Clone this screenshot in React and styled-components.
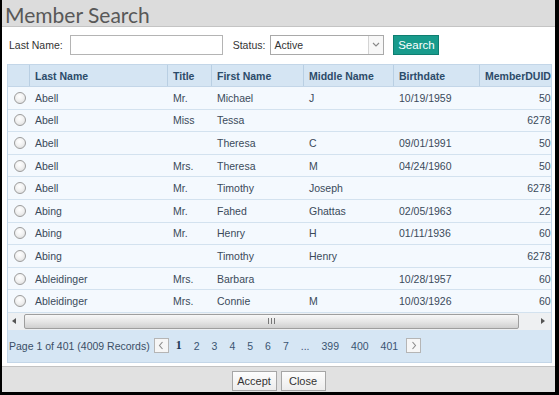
import React from "react";
import styled, { createGlobalStyle } from "styled-components";

const Global = createGlobalStyle`
  html, body { margin: 0; padding: 0; background: #ffffff; }
  body { font-family: "Liberation Sans", Arial, sans-serif; }
  * { box-sizing: border-box; }
`;

const FONT = `"Liberation Sans", Arial, sans-serif`;
const COLS = "21px 138px 44px 92px 90px 86px 101px";

const Frame = styled.div`
  width: 559px;
  height: 395px;
  border-left: 2px solid #000;
  border-right: 4px solid #000;
  border-bottom: 3px solid #000;
  background: #fff;
  display: flex;
  flex-direction: column;
  font-family: ${FONT};
  font-size: 10.5px;
  color: #333;
`;

const TitleBar = styled.div`
  height: 27px;
  background: #dcdcdc;
  border-bottom: 1px solid #c4c4c4;
  padding: 4px 0 0 3px;
  font-family: Lato, "Open Sans", sans-serif;
  font-size: 21px;
  line-height: 22px;
  color: #585858;
  white-space: nowrap;
`;

const Form = styled.div`
  display: flex;
  align-items: center;
  padding: 7px 0 9px 7px;
  height: 37px;
`;

const Label = styled.span`
  color: #333;
  margin-left: ${(p) => p.$ml || 0}px;
  margin-right: ${(p) => p.$mr || 4}px;
`;

const TextBox = styled.div`
  width: 153px;
  height: 20px;
  border: 1px solid #b4b4b4;
  background: #fff;
`;

const SelectBox = styled.div`
  width: 114px;
  height: 20px;
  border: 1px solid #a9a9a9;
  background: #fff;
  display: flex;
  align-items: stretch;
`;

const SelectText = styled.span`
  flex: 1;
  padding-left: 3px;
  line-height: 18px;
  color: #333;
`;

const SelectArrow = styled.span`
  width: 15px;
  border-left: 1px solid #d4d4d4;
  display: flex;
  align-items: center;
  justify-content: center;
  background: #f7f7f7;
`;

const SearchButton = styled.button`
  margin-left: 9px;
  width: 46px;
  height: 20px;
  padding: 0;
  border: 1px solid #0f7e71;
  background: #189b8c;
  color: #fff;
  font-family: ${FONT};
  font-size: 11.5px;
`;

const Grid = styled.div`
  margin-left: 5px;
  width: 545px;
  border: 1px solid #c3d6e8;
  display: flex;
  flex-direction: column;
`;

const Clip = styled.div`
  overflow: hidden;
  width: 543px;
`;

const HeaderRow = styled.div`
  display: grid;
  grid-template-columns: ${COLS};
  width: max-content;
  height: 22px;
  background: #d5e5f3;
  border-bottom: 1px solid #c3d6e8;
`;

const HeadCell = styled.div`
  border-left: ${(p) => (p.$first ? "none" : "1px solid #b9cfe3")};
  padding-left: 5px;
  display: flex;
  align-items: center;
  font-weight: bold;
  color: #2c4b69;
  white-space: nowrap;
`;

const Row = styled.div`
  display: grid;
  grid-template-columns: ${COLS};
  width: max-content;
  height: 22.6px;
  background: #f4f9fe;
  border-bottom: 1px solid #d3e2ef;
`;

const Cell = styled.div`
  display: flex;
  align-items: center;
  justify-content: ${(p) => (p.$right ? "flex-end" : "flex-start")};
  padding: ${(p) => (p.$right ? "0 6px 0 0" : "0 0 0 6px")};
  color: #3a4a5a;
  white-space: nowrap;
`;

const RadioCell = styled.div`
  display: flex;
  align-items: center;
  justify-content: center;
  padding-left: 2px;
`;

const Radio = styled.span`
  width: 12px;
  height: 12px;
  border-radius: 50%;
  border: 1px solid #9c9c9c;
  background: radial-gradient(circle at 45% 35%, #ffffff 0%, #f0f0f0 50%, #d6d6d6 100%);
`;

const ScrollBar = styled.div`
  height: 17px;
  background: #eef0f2;
  display: flex;
  align-items: center;
`;

const ScrollArrow = styled.div`
  width: ${(p) => p.$w}px;
  height: 17px;
  display: flex;
  align-items: center;
  justify-content: ${(p) => (p.$right ? "flex-end" : "flex-start")};
  padding: ${(p) => (p.$right ? "0 6px 0 0" : "0 0 0 4px")};
`;

const Thumb = styled.div`
  flex: 1;
  height: 15px;
  border: 1px solid #9e9e9e;
  border-radius: 2px;
  background: linear-gradient(#f8f8f8, #e4e4e4 55%, #cfcfcf);
  display: flex;
  align-items: center;
  justify-content: center;
`;

const Grip = styled.span`
  width: 7px;
  height: 6px;
  border-left: 1px solid #777;
  border-right: 1px solid #777;
  position: relative;
  &::after {
    content: "";
    position: absolute;
    left: 2px;
    top: 0;
    width: 1px;
    height: 6px;
    background: #777;
  }
`;

const Pager = styled.div`
  height: 32px;
  background: #d6e6f4;
  display: flex;
  align-items: center;
  padding-left: 1px;
  color: #3a5472;
`;

const PagerInfo = styled.span`
  color: #3a4f66;
  margin-right: 4px;
`;

const PageNav = styled.span`
  width: 15px;
  height: 15px;
  border: 1px solid #b5b5b5;
  background: #f6f6f6;
  display: inline-flex;
  align-items: center;
  justify-content: center;
  margin: 0 ${(p) => p.$mr || 0}px 0 ${(p) => p.$ml || 0}px;
`;

const PageNum = styled.span`
  padding: 0 6px;
  font-weight: ${(p) => (p.$current ? "bold" : "normal")};
  color: ${(p) => (p.$current ? "#1f3a56" : "#3a5472")};
  font-family: ${(p) => (p.$current ? `"Liberation Serif", serif` : FONT)};
  font-size: ${(p) => (p.$current ? "12px" : "10.5px")};
`;

const Footer = styled.div`
  margin-top: auto;
  height: 26px;
  background: #e1e1e1;
  border-top: 1px solid #c2c2c2;
  display: flex;
  justify-content: center;
  align-items: flex-end;
  gap: 4px;
  padding-bottom: 1px;
`;

const FooterButton = styled.button`
  width: 45px;
  height: 20px;
  padding: 0;
  border: 1px solid #a6a6a6;
  background: linear-gradient(#fdfdfd, #ececec);
  font-family: ${FONT};
  font-size: 11px;
  color: #333;
`;

const rows = [
  ["Abell", "Mr.", "Michael", "J", "10/19/1959", "508123"],
  ["Abell", "Miss", "Tessa", "", "", "62781234"],
  ["Abell", "", "Theresa", "C", "09/01/1991", "509123"],
  ["Abell", "Mrs.", "Theresa", "M", "04/24/1960", "508456"],
  ["Abell", "Mr.", "Timothy", "Joseph", "", "62781567"],
  ["Abing", "Mr.", "Fahed", "Ghattas", "02/05/1963", "228123"],
  ["Abing", "Mr.", "Henry", "H", "01/11/1936", "607123"],
  ["Abing", "", "Timothy", "Henry", "", "62781890"],
  ["Ableidinger", "Mrs.", "Barbara", "", "10/28/1957", "606123"],
  ["Ableidinger", "Mrs.", "Connie", "M", "10/03/1926", "606456"],
];

const headers = ["Last Name", "Title", "First Name", "Middle Name", "Birthdate", "MemberDUID"];

const Tri = ({ dir }) => (
  <svg width="4" height="6" viewBox="0 0 4 6">
    <path d={dir === "left" ? "M4 0 L0 3 L4 6 Z" : "M0 0 L4 3 L0 6 Z"} fill="#555" />
  </svg>
);

const Chevron = ({ dir }) => (
  <svg width="6" height="9" viewBox="0 0 6 9">
    <path
      d={dir === "left" ? "M4.5 1 L1.5 4.5 L4.5 8" : "M1.5 1 L4.5 4.5 L1.5 8"}
      stroke="#8a8a8a"
      strokeWidth="1.1"
      fill="none"
    />
  </svg>
);

export default function App() {
  return (
    <>
      <Global />
      <Frame>
        <TitleBar>Member Search</TitleBar>
        <Form>
          <Label $mr={7}>Last Name:</Label>
          <TextBox />
          <Label $ml={10} $mr={5}>Status:</Label>
          <SelectBox>
            <SelectText>Active</SelectText>
            <SelectArrow>
              <svg width="8" height="5" viewBox="0 0 8 5">
                <path d="M1 1 L4 4 L7 1" stroke="#888" strokeWidth="1.1" fill="none" />
              </svg>
            </SelectArrow>
          </SelectBox>
          <SearchButton>Search</SearchButton>
        </Form>
        <Grid>
          <Clip>
            <HeaderRow>
              <HeadCell $first />
              {headers.map((h) => (
                <HeadCell key={h}>{h}</HeadCell>
              ))}
            </HeaderRow>
            {rows.map((r, i) => (
              <Row key={i}>
                <RadioCell>
                  <Radio />
                </RadioCell>
                {r.map((v, j) => (
                  <Cell key={j} $right={j === 5}>
                    {v}
                  </Cell>
                ))}
              </Row>
            ))}
          </Clip>
          <ScrollBar>
            <ScrollArrow $w={16}>
              <Tri dir="left" />
            </ScrollArrow>
            <Thumb>
              <Grip />
            </Thumb>
            <ScrollArrow $w={32} $right>
              <Tri dir="right" />
            </ScrollArrow>
          </ScrollBar>
          <Pager>
            <PagerInfo>Page 1 of 401 (4009 Records)</PagerInfo>
            <PageNav $mr={1}>
              <Chevron dir="left" />
            </PageNav>
            <PageNum $current>1</PageNum>
            <PageNum>2</PageNum>
            <PageNum>3</PageNum>
            <PageNum>4</PageNum>
            <PageNum>5</PageNum>
            <PageNum>6</PageNum>
            <PageNum>7</PageNum>
            <PageNum>...</PageNum>
            <PageNum>399</PageNum>
            <PageNum>400</PageNum>
            <PageNum>401</PageNum>
            <PageNav $ml={2}>
              <Chevron dir="right" />
            </PageNav>
          </Pager>
        </Grid>
        <Footer>
          <FooterButton>Accept</FooterButton>
          <FooterButton>Close</FooterButton>
        </Footer>
      </Frame>
    </>
  );
}
